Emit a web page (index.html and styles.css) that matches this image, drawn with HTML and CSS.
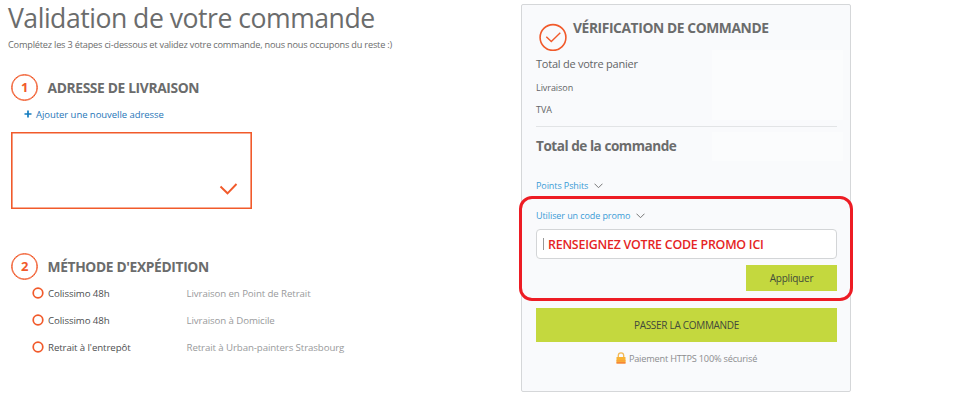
FILE: index.html
```html
<!DOCTYPE html>
<html lang="fr">
<head>
<meta charset="utf-8">
<title>Validation de votre commande</title>
<link rel="stylesheet" href="styles.css">
</head>
<body>
<div class="page">
  <main class="checkout">
    <h1>Validation de votre commande</h1>
    <p class="intro">Complétez les 3 étapes ci-dessous et validez votre commande, nous nous occupons du reste :)</p>
    <section class="step address">
      <h2><span class="num">1</span><span>ADRESSE DE LIVRAISON</span></h2>
      <a class="add">
        <svg width="8" height="8" viewBox="0 0 8 8"><path d="M4 .5v7M.5 4h7" stroke="#137cc0" stroke-width="1.7"/></svg>
        <span>Ajouter une nouvelle adresse</span>
      </a>
      <div class="address-box">
        <svg width="19" height="13" viewBox="0 0 19 13"><path d="M1.500 4.500l7 6.800L17.500 2" fill="none" stroke="#f15a2b" stroke-width="1.900"/></svg>
      </div>
    </section>
    <section class="step shipping">
      <h2><span class="num">2</span><span>MÉTHODE D'EXPÉDITION</span></h2>
      <ul>
        <li><svg class="radio" width="12" height="12" viewBox="0 0 12 12"><circle cx="6" cy="6" r="4.800"/></svg><span class="method">Colissimo 48h</span><span class="detail">Livraison en Point de Retrait</span></li>
        <li><svg class="radio" width="12" height="12" viewBox="0 0 12 12"><circle cx="6" cy="6" r="4.800"/></svg><span class="method">Colissimo 48h</span><span class="detail">Livraison à Domicile</span></li>
        <li><svg class="radio" width="12" height="12" viewBox="0 0 12 12"><circle cx="6" cy="6" r="4.800"/></svg><span class="method">Retrait à l'entrepôt</span><span class="detail">Retrait à Urban-painters Strasbourg</span></li>
      </ul>
    </section>
  </main>
  <aside class="summary">
    <header>
      <svg width="28" height="28" viewBox="0 0 28 28" fill="none" stroke="#f15a2b"><circle cx="14" cy="14.500" r="12.900" stroke-width="1.600"/><path d="M7.300 13.700l5 4.900 9-8.800" stroke-width="1.400"/></svg>
      <h2>VÉRIFICATION DE COMMANDE</h2>
    </header>
    <div class="amounts">
      <div class="labels">
        <div class="row cart">Total de votre panier</div>
        <div class="row">Livraison</div>
        <div class="row">TVA</div>
      </div>
      <div class="values"></div>
    </div>
    <div class="total">
      <strong>Total de la commande</strong>
      <div class="total-value"></div>
    </div>
    <a class="toggle points"><span>Points Pshits</span><svg width="9" height="6" viewBox="0 0 9 6"><path d="M.5 .7l4 4 4-4" fill="none" stroke="#777" stroke-width="1"/></svg></a>
    <div class="promo">
      <a class="toggle"><span>Utiliser un code promo</span><svg width="9" height="6" viewBox="0 0 9 6"><path d="M.5 .7l4 4 4-4" fill="none" stroke="#777" stroke-width="1"/></svg></a>
      <div class="field"><i class="caret"></i><span>RENSEIGNEZ VOTRE CODE PROMO ICI</span></div>
      <button class="apply">Appliquer</button>
    </div>
    <button class="order">PASSER LA COMMANDE</button>
    <p class="secure">
      <svg width="10" height="12" viewBox="0 0 10 12"><path d="M2.300 6V3.500a2.700 2.700 0 0 1 5.400 0V6" fill="none" stroke="#f2b956" stroke-width="1.300"/><rect x=".5" y="5" width="9" height="6.500" rx=".6" fill="#f9b233"/><path d="M.5 8.200h9v1.200h-9z" fill="#f9a03a"/><path d="M.5 10.200h9v1.300h-9z" fill="#f47b3a"/></svg>
      <span>Paiement HTTPS 100% sécurisé</span>
    </p>
  </aside>
</div>
</body>
</html>
```
FILE: styles.css
```css
* { box-sizing: border-box; }
body { margin: 0; background: #fff; color: #6b6c6c; font-family: "Open Sans", sans-serif; }
h1, h2, p, ul { margin: 0; padding: 0; }
button { border: 0; padding: 0; font-family: inherit; }
svg { display: block; flex: none; }
.page { display: flex; width: 960px; height: 400px; overflow: hidden; }
.checkout { width: 521px; flex: none; padding-left: 8px; white-space: nowrap; }
h1 { font-size: 26.6px; font-weight: 400; line-height: 37px; height: 36px; letter-spacing: -.49px; }
.intro { font-size: 9.2px; line-height: 18px; height: 18px; letter-spacing: -.2px; }
.step { padding-left: 3px; }
.address { margin-top: 20px; }
.step h2 { display: flex; align-items: center; height: 27px; gap: 9.5px; font-size: 13.8px; font-weight: 700; letter-spacing: -.36px; }
.step h2 span:last-child { margin-top: -1px; }
.num { width: 27px; height: 27px; flex: none; border: 1px solid #f15a2b; box-shadow: inset 0 0 0 .6px #f15a2b; border-radius: 50%; color: #f15a2b; font-size: 13px; font-weight: 700; line-height: 25px; text-align: center; }
.add { display: flex; align-items: center; gap: 4px; height: 18px; margin: 4px 0 0 13px; color: #1f76b8; font-size: 9.5px; letter-spacing: -.05px; }
.address-box { display: flex; align-items: flex-end; justify-content: flex-end; width: 241px; height: 77px; margin-top: 9px; padding: 0 13px 13px 0; border: 1px solid #f15a2b; box-shadow: inset 0 0 0 .6px #f15a2b; }
.shipping { margin-top: 44px; }
.shipping ul { list-style: none; }
.shipping li { display: flex; align-items: center; height: 27px; padding-left: 21px; font-size: 9.7px; letter-spacing: -.1px; }
.radio { margin: 0 4px 2px 0; fill: none; stroke: #f15a2b; stroke-width: 1.7; }
.method { width: 138.5px; color: #4d4e50; }
.detail { color: #999a9c; }
.summary { display: flex; flex-direction: column; width: 330px; height: 388px; margin-top: 4px; padding: 0 13px 0 14px; background: #f9fafc; border: 1px solid #d5d7d9; border-radius: 2px; white-space: nowrap; flex: none; }
.summary header { display: flex; gap: 6px; height: 48px; padding: 18px 0 0 3px; flex: none; }
.summary h2 { margin-top: -6px; font-size: 13.8px; line-height: 21px; font-weight: 700; letter-spacing: -.4px; }
.amounts { display: flex; justify-content: space-between; height: 74px; border-bottom: 1px solid #e2e4e6; flex: none; }
.row { height: 22px; line-height: 23px; font-size: 9px; letter-spacing: -.06px; color: #636466; }
.cart { height: 23px; line-height: 21px; font-size: 11px; letter-spacing: -.24px; }
.values { width: 131px; height: 70px; margin: -3px -6px 0 0; background: #fbfcfd; }
.total { display: flex; justify-content: space-between; height: 44px; flex: none; }
.total strong { font-size: 13.6px; line-height: 38px; font-weight: 700; letter-spacing: -.48px; }
.total-value { width: 131px; height: 29px; margin: 5px -6px 0 0; background: #fbfcfd; }
.toggle { display: flex; align-items: center; gap: 6px; height: 18px; color: #3b9bd6; font-size: 9px; letter-spacing: -.09px; }
.toggle svg { margin-top: 2px; }
.points { margin-top: 5px; }
.promo { display: flex; flex-direction: column; width: 334px; height: 105px; margin: 2px 0 0 -17px; padding: 7px 13px 0 14px; border: 3px solid #ed1c24; border-radius: 13px; flex: none; }
.promo .toggle { height: 18px; flex: none; }
.field { display: flex; align-items: center; width: 301px; height: 30px; margin-top: 5px; padding-left: 6px; background: #fff; border: 1px solid #d3d5d7; border-radius: 4px; color: #e52424; font-size: 12.4px; font-weight: 600; letter-spacing: -.22px; flex: none; }
.caret { width: 1px; height: 12px; margin-right: 4px; background: #999; }
.apply { align-self: flex-end; width: 91px; height: 26px; margin: 6px 0 0; background: #c4d83e; color: #424a3b; font-size: 10px; letter-spacing: -.22px; flex: none; }
.order { width: 301px; height: 34px; margin-top: 7px; background: #c4d83e; color: #424a3b; font-size: 10px; letter-spacing: -.3px; flex: none; }
.secure { display: flex; align-items: center; justify-content: center; gap: 3px; height: 20px; margin-top: 6px; color: #8c8d8f; font-size: 9.2px; letter-spacing: -.2px; }
```
